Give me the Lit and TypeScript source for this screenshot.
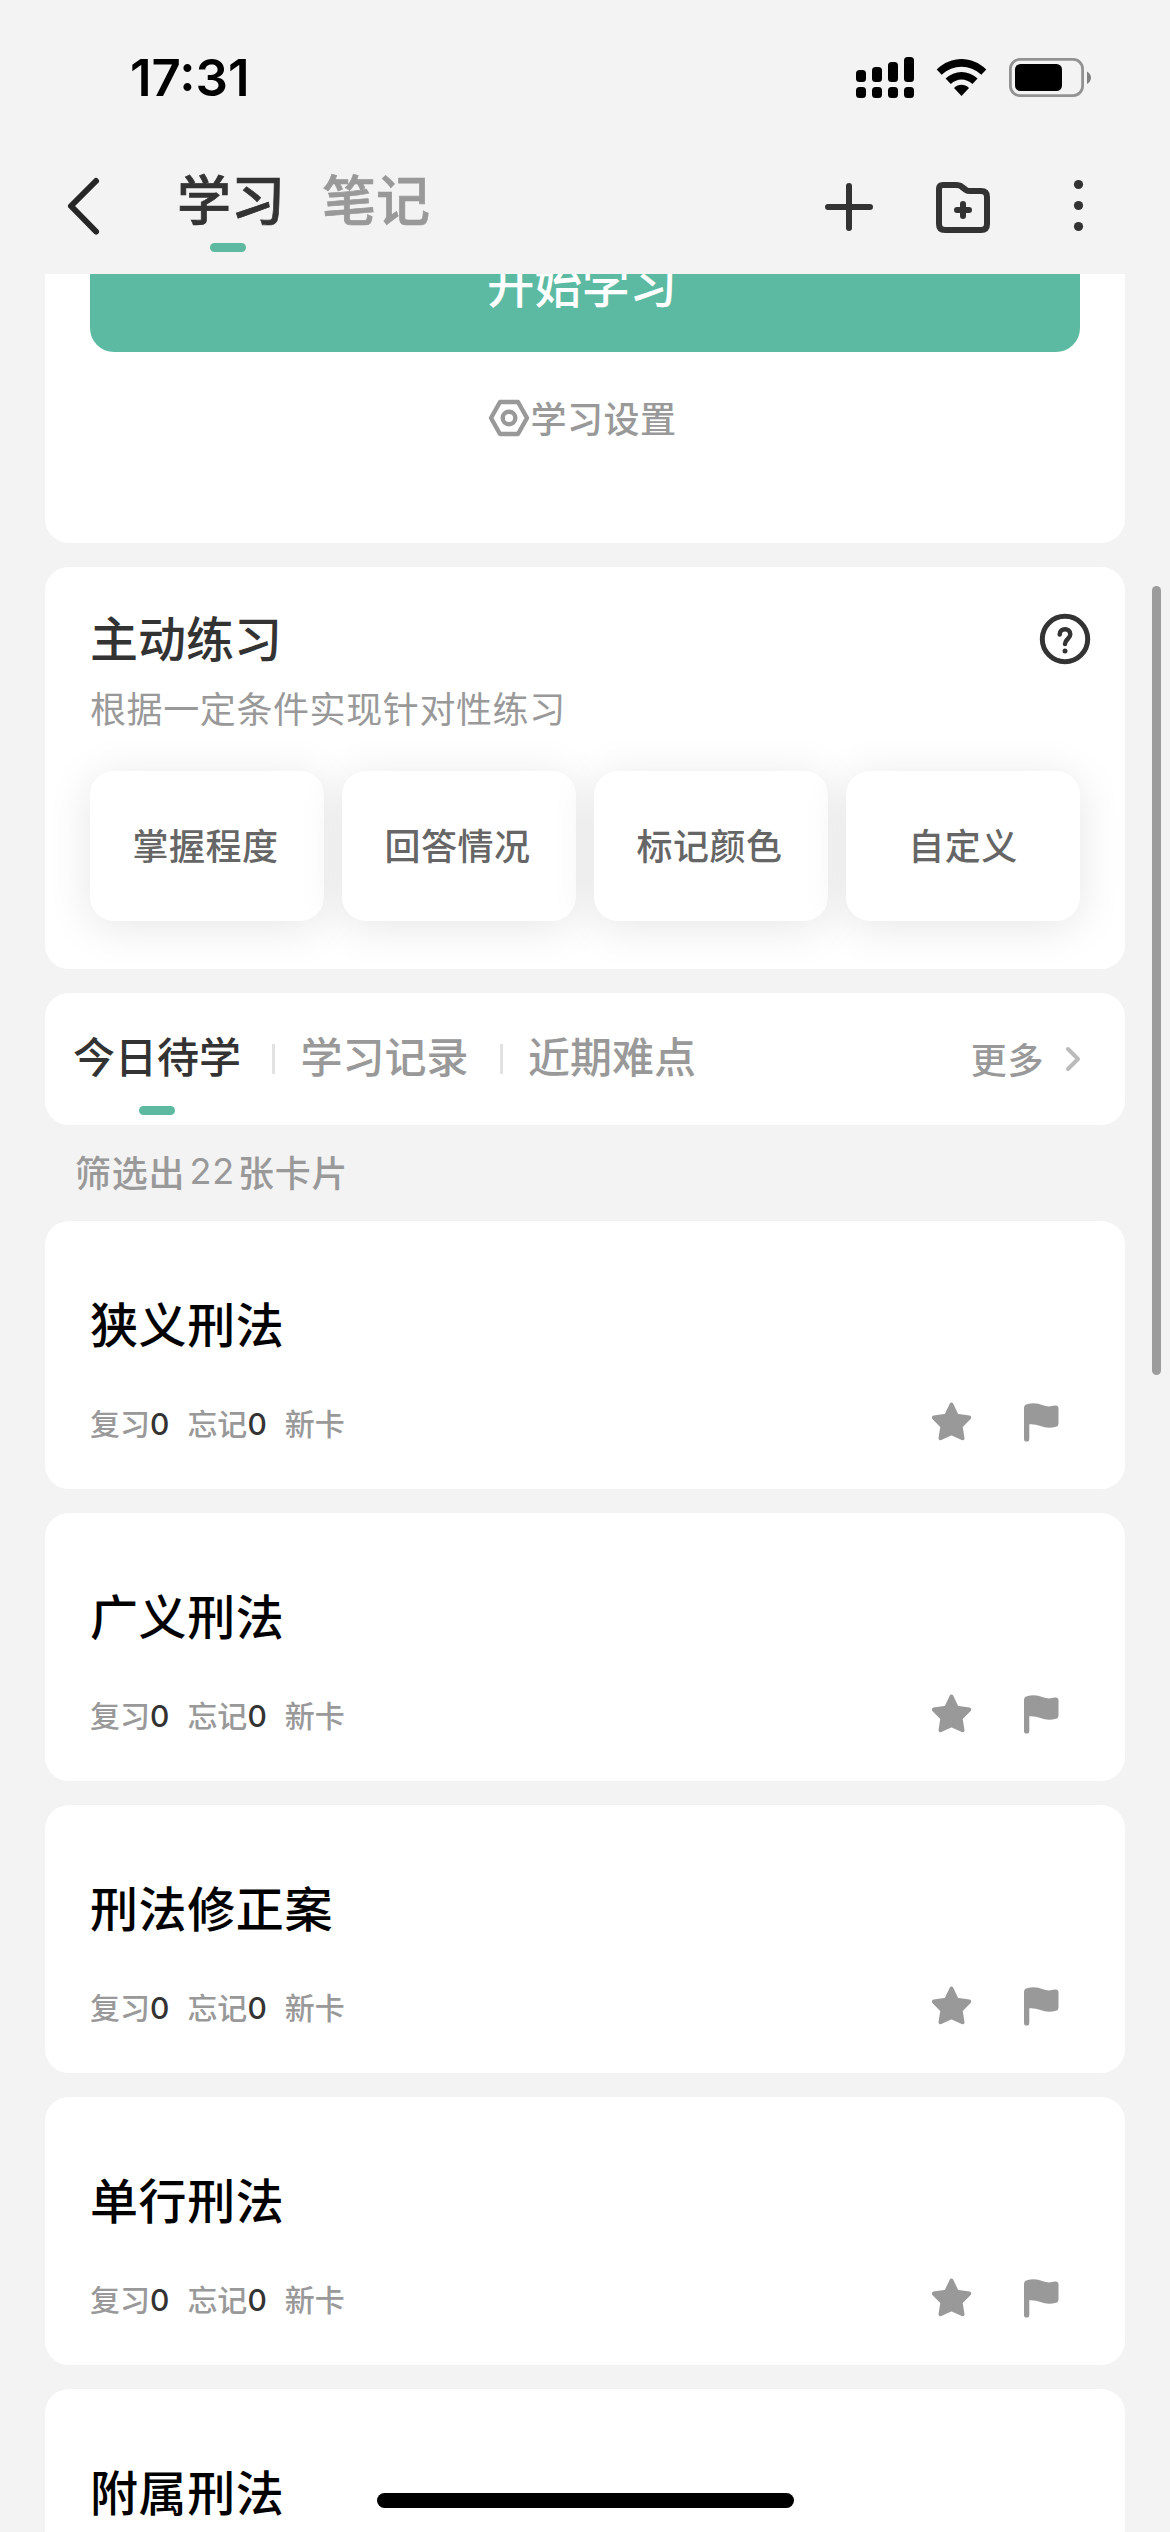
import { LitElement, html, css, svg, nothing } from "lit";
import { customElement, property } from "lit/decorators.js";

const starIcon = svg`<path d="M19.5 2.500 L24.800 13.800 L37.2 15.600 L28.600 24.4 L30.500 36.2 L19.5 31.200 L8.5 36.2 L10.400 24.4 L1.8 15.600 L14.200 13.800 Z" fill="#999" stroke="#999" stroke-width="4" stroke-linejoin="round"/>`;

@customElement("status-bar")
class StatusBar extends LitElement {
  static styles = css`
    :host {
      display: flex;
      align-items: center;
      justify-content: space-between;
      height: 156px;
      padding: 0 78px 0 130px;
    }
    .time {
      font: 600 51px/60px Inter, "Liberation Sans", sans-serif;
      letter-spacing: 0;
      color: #000;
    }
    .icons {
      display: block;
      width: 236px;
      height: 42px;
    }
  `;
  render() {
    return html`
      <span class="time">17:31</span>
      <svg class="icons" viewBox="856 57 236 42">
        <rect x="856" y="70" width="10" height="12" rx="3.5" />
        <rect x="872" y="67" width="10" height="15" rx="3.5" />
        <rect x="888" y="62" width="10" height="20" rx="3.5" />
        <rect x="904" y="57" width="10" height="25" rx="3.5" />
        <rect x="856" y="87" width="10" height="11" rx="3.5" />
        <rect x="872" y="87" width="10" height="11" rx="3.5" />
        <rect x="888" y="87" width="10" height="11" rx="3.5" />
        <rect x="904" y="87" width="10" height="11" rx="3.5" />
        <path d="M936.7 69.5 C951 55.5 972 55.5 986.3 69.5 L981.3 74.8 C970 64 953 64 941.7 74.8 Z" />
        <path d="M945.6 78.6 C954.5 69.8 968.5 69.8 977.6 78.6 L972.4 84 C966 78 957 78 950.8 84 Z" />
        <path d="M954 88 C958.5 83.6 964.5 83.6 969 88 L961.5 96 Z" />
        <rect x="1010.4" y="59.4" width="72.2" height="36.2" rx="9.5" fill="none" stroke="#929292" stroke-width="2.8" />
        <rect x="1015" y="64" width="47" height="27" rx="5.5" />
        <path d="M1087 71.5 C1092.3 74 1092.3 81.5 1087 84 Z" fill="#808080" />
      </svg>
    `;
  }
}

@customElement("nav-bar")
class NavBar extends LitElement {
  static styles = css`
    :host {
      display: flex;
      height: 118px;
      padding: 0 78px 0 66px;
      justify-content: space-between;
    }
    .left {
      display: flex;
    }
    .back {
      display: block;
      width: 36px;
      height: 60px;
      margin: 20px 75px 0 0;
    }
    .tabs {
      display: flex;
      gap: 37px;
      padding-top: 6px;
    }
    .tab {
      display: flex;
      flex-direction: column;
      align-items: center;
      gap: 9px;
      font-size: 54px;
      line-height: 72px;
      font-weight: 500;
      color: #999;
      -webkit-text-stroke: 0.7px currentColor;
    }
    .active {
      color: #333;
    }
    .active::after {
      content: "";
      width: 36px;
      height: 9px;
      border-radius: 4.5px;
      background: #5dbaa0;
      margin-right: 6px;
    }
    .actions {
      display: block;
      width: 270px;
      height: 60px;
      margin-top: 22px;
    }
  `;
  render() {
    return html`
      <div class="left">
        <svg class="back" viewBox="66 176 36 60" fill="none" stroke="#262626" stroke-width="6" stroke-linecap="round" stroke-linejoin="round">
          <path d="M96 181 L71 206 L96 231.5" />
        </svg>
        <div class="tabs">
          <span class="tab active">学习</span>
          <span class="tab">笔记</span>
        </div>
      </div>
      <svg class="actions" viewBox="822 178 270 60" fill="none" stroke="#333" stroke-width="6" stroke-linecap="round" stroke-linejoin="round">
        <path d="M828 207 H870 M849 186 V228" />
        <path d="M939 189 Q939 185 943 185 H956 Q960 185 962 187 L966 190 Q967.5 191 970 191 H981 Q987 191 987 197 V224 Q987 230 981 230 H945 Q939 230 939 224 Z" />
        <path d="M957 210 H969 M963 204 V216" />
        <g fill="#333" stroke="none">
          <circle cx="1078.5" cy="184.5" r="4.6" />
          <circle cx="1078.5" cy="205.5" r="4.6" />
          <circle cx="1078.5" cy="226.5" r="4.6" />
        </g>
      </svg>
    `;
  }
}

@customElement("study-card")
class StudyCard extends LitElement {
  @property() name = "";
  @property({ type: Boolean }) collapsed = false;
  static styles = css`
    :host {
      display: block;
      box-sizing: border-box;
      height: 268px;
      flex: none;
      padding: 65px 61px 0 45px;
      border-radius: 24px;
      background: #fff;
    }
    .name {
      font-size: 48px;
      line-height: 72px;
      letter-spacing: 0.6px;
      font-weight: 500;
      color: #000;
    }
    .row {
      display: flex;
      align-items: center;
      justify-content: space-between;
      margin-top: 45px;
      height: 40px;
    }
    .meta {
      display: flex;
      gap: 18px;
      font-size: 30px;
      font-weight: 500;
      line-height: 40px;
      color: #999;
    }
    .num {
      font-family: Inter, "Liberation Sans", sans-serif;
      font-size: 30px;
      color: #333;
    }
    .marks {
      display: block;
      width: 132px;
      height: 42px;
    }
  `;
  render() {
    return html`
      <div class="name">${this.name}</div>
      ${this.collapsed
        ? nothing
        : html`<div class="row">
            <div class="meta">
              <span>复习<span class="num">0</span></span>
              <span>忘记<span class="num">0</span></span>
              <span>新卡</span>
            </div>
            <svg class="marks" viewBox="0 0 132 42">
              ${starIcon}
              <path
                d="M92 6 Q92 3 95 2.2 Q103 -.2 111 3.3 Q116 5.3 123 3.6 Q126.500 3 126.500 6 V21.500 Q126.500 24 124 24.700 Q116 27 108.500 24 Q103 21.800 97.300 22.300 V37 Q97.300 39.600 94.700 39.600 Q92 39.600 92 37 Z"
                fill="#999"
              />
            </svg>
          </div>`}
    `;
  }
}

@customElement("app-root")
class AppRoot extends LitElement {
  static styles = css`
    :host {
      display: block;
      position: relative;
      width: 1170px;
      height: 2532px;
      overflow: hidden;
      background: #f3f3f3;
      font-family: "Noto Sans CJK SC", "Noto Sans", sans-serif;
    }
    .page {
      display: flex;
      flex-direction: column;
      height: 2258px;
      padding: 0 45px;
      overflow: hidden;
    }
    .card {
      flex: none;
      box-sizing: border-box;
      border-radius: 24px;
      background: #fff;
    }
    .start {
      display: flex;
      flex-direction: column;
      align-items: center;
      height: 269px;
      padding: 0 45px;
      border-radius: 0 0 24px 24px;
      overflow: hidden;
    }
    .start-button {
      display: flex;
      align-items: center;
      justify-content: center;
      box-sizing: border-box;
      flex: none;
      width: 990px;
      height: 132px;
      margin-top: -54px;
      padding-bottom: 7px;
      padding-right: 6px;
      border-radius: 24px;
      background: #5dbaa2;
      color: #fff;
      font-size: 47.5px;
      font-weight: 500;
    }
    .settings {
      display: flex;
      align-items: center;
      margin-top: 38px;
      margin-right: 5px;
      font-size: 36px;
      font-weight: 500;
      line-height: 54px;
      letter-spacing: 0.5px;
      color: #999;
    }
    .hex {
      display: block;
      width: 42px;
      height: 38px;
      margin-top: 2px;
    }
    .practice {
      height: 402px;
      margin-top: 24px;
      padding: 33px 45px 0;
      overflow: hidden;
    }
    .head {
      display: flex;
      justify-content: space-between;
      align-items: center;
      margin-right: -11px;
    }
    .title {
      font-size: 48px;
      line-height: 72px;
      font-weight: 500;
      color: #333;
    }
    .help {
      display: block;
      width: 52px;
      height: 52px;
      margin-top: 5px;
    }
    .sub {
      margin-top: 8px;
      font-size: 36px;
      line-height: 54px;
      letter-spacing: 0.6px;
      color: #999;
    }
    .options {
      display: grid;
      grid-template-columns: repeat(4, 1fr);
      gap: 18px;
      margin-top: 37px;
    }
    .option {
      display: flex;
      align-items: center;
      justify-content: center;
      box-sizing: border-box;
      height: 150px;
      padding-right: 3px;
      padding-bottom: 4px;
      border-radius: 24px;
      background: #fff;
      box-shadow: 0 6px 45px rgba(0, 0, 0, 0.1);
    }
    .option:last-child {
      padding-right: 0;
    }
    .option-text {
      position: relative;
      font-size: 36px;
      font-weight: 500;
      letter-spacing: 0.5px;
      color: #666;
    }
    .filter {
      display: flex;
      align-items: center;
      height: 132px;
      margin-top: 24px;
      padding: 0 45px 0 28px;
      font-size: 42px;
      font-weight: 500;
      line-height: 60px;
      color: #999;
    }
    .item {
      display: flex;
      flex-direction: column;
      align-items: center;
      box-sizing: border-box;
      height: 104px;
      margin-top: 16px;
      padding-top: 10px;
    }
    .on {
      color: #333;
    }
    .on::after {
      content: "";
      width: 36px;
      height: 9px;
      margin-top: 21px;
      border-radius: 4.5px;
      background: #5dbaa0;
    }
    .bar {
      width: 3px;
      height: 30px;
      margin: 0 25.5px 0 31px;
      background: #e2e2e2;
    }
    .more {
      display: flex;
      align-items: center;
      gap: 20px;
      margin-left: auto;
      font-size: 36px;
      letter-spacing: 0.6px;
      padding-bottom: 3px;
    }
    .chev {
      display: block;
      width: 18px;
      height: 28px;
      margin: 2px -2px 0 0;
    }
    .count {
      flex: none;
      box-sizing: border-box;
      display: flex;
      align-items: center;
      height: 96px;
      padding: 0 0 4px 30px;
      font-size: 36px;
      font-weight: 500;
      letter-spacing: 0.8px;
      color: #999;
      white-space: pre;
    }
    .n {
      font-family: Inter, "Liberation Sans", sans-serif;
      font-weight: 400;
      margin: 0 3px 0 4px;
    }
    .list {
      display: flex;
      flex-direction: column;
      gap: 24px;
    }
    .scroll {
      position: absolute;
      left: 1152px;
      top: 586px;
      width: 9px;
      height: 789px;
      border-radius: 4.5px;
      background: #9c9c9c;
    }
    .home {
      position: absolute;
      left: 377px;
      top: 2493px;
      width: 417px;
      height: 15px;
      border-radius: 7.5px;
      background: #000;
    }
  `;

  private options = ["掌握程度", "回答情况", "标记颜色", "自定义"];
  private cards = ["狭义刑法", "广义刑法", "刑法修正案", "单行刑法", "附属刑法"];

  render() {
    return html`
      <status-bar></status-bar>
      <nav-bar></nav-bar>
      <main class="page">
        <section class="card start">
          <div class="start-button">开始学习</div>
          <div class="settings">
            <svg class="hex" viewBox="0 0 42 38" fill="none" stroke="#999" stroke-width="4.400" stroke-linejoin="round">
              <path d="M12 3 H30 L39 19 L30 35 H12 L3 19 Z" />
              <circle cx="21" cy="19" r="6.300" />
            </svg>
            <span>学习设置</span>
          </div>
        </section>
        <section class="card practice">
          <div class="head">
            <span class="title">主动练习</span>
            <svg class="help" viewBox="0 0 52 52" fill="none" stroke="#333" stroke-width="5" stroke-linecap="round">
              <circle cx="26" cy="26" r="22.700" />
              <path d="M20.700 21.500 C20.700 14.500 31.300 14.500 31.300 21.300 C31.300 26 26 26 26 31" stroke-width="4.500" />
              <circle cx="26" cy="38" r="2.500" fill="#333" stroke="none" />
            </svg>
          </div>
          <div class="sub">根据一定条件实现针对性练习</div>
          <div class="options">
            ${this.options.map((o) => html`<div class="option"><span class="option-text">${o}</span></div>`)}
          </div>
        </section>
        <section class="card filter">
          <span class="item on">今日待学</span>
          <span class="bar"></span>
          <span class="item">学习记录</span>
          <span class="bar"></span>
          <span class="item">近期难点</span>
          <span class="more">
            更多
            <svg class="chev" viewBox="0 0 18 28" fill="none" stroke="#bbb" stroke-width="4" stroke-linecap="round" stroke-linejoin="round">
              <path d="M4 4 L14 14 L4 24" />
            </svg>
          </span>
        </section>
        <div class="count">筛选出<span class="n">22</span>张卡片</div>
        <div class="list">
          ${this.cards.map(
            (c, i) => html`<study-card .name=${c} .collapsed=${i === this.cards.length - 1}></study-card>`
          )}
        </div>
      </main>
      <div class="scroll"></div>
      <div class="home"></div>
    `;
  }
}
